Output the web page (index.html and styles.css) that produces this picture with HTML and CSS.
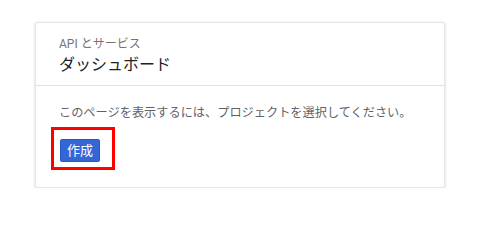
FILE: index.html
```html
<!DOCTYPE html>
<html lang="ja">
<head>
<meta charset="utf-8">
<link rel="stylesheet" href="styles.css">
</head>
<body>
<div class="card">
  <div class="card-header">
    <div class="eyebrow">API とサービス</div>
    <div class="title">ダッシュボード</div>
  </div>
  <div class="card-body">
    <p class="message">このページを表示するには、プロジェクトを選択してください。</p>
    <div class="action">
      <button class="btn-primary">作成</button>
      <span class="highlight"></span>
    </div>
  </div>
</div>
</body>
</html>
```
FILE: styles.css
```css
html, body {
  margin: 0;
  padding: 0;
  background: #ffffff;
}
body {
  font-family: Roboto, "Noto Sans CJK JP", sans-serif;
  padding: 22px 0 0 35px;
}
.card {
  width: 410px;
  height: 166px;
  box-sizing: border-box;
  background: #fff;
  border: 1px solid #e6e6e6;
  border-radius: 2px;
  box-shadow: 0 1px 3px 0 rgba(0,0,0,0.18);
}
.card-header {
  height: 63px;
  box-sizing: border-box;
  padding: 13px 23px 0 23px;
  border-bottom: 1px solid #e0e0e0;
}
.eyebrow {
  font-size: 12px;
  line-height: 16px;
  color: #757575;
}
.title {
  font-size: 16px;
  line-height: 24px;
  color: #202124;
  margin-top: 1px;
}
.card-body {
  padding: 17px 23px 0 23px;
}
.message {
  margin: 0;
  font-size: 12.2px;
  line-height: 20px;
  color: #5f6368;
}
.action {
  position: relative;
  display: inline-block;
  margin-top: 16px;
  margin-left: 1px;
}
.btn-primary {
  display: block;
  height: 23px;
  width: 40px;
  padding: 0;
  box-sizing: border-box;
  border: 1px solid #2a56c6;
  border-radius: 2px;
  background: #3367d6;
  color: #ffffff;
  font-family: Roboto, "Noto Sans CJK JP", sans-serif;
  font-size: 13px;
  line-height: 21px;
}
.highlight {
  position: absolute;
  left: -9px;
  top: -12px;
  right: -15px;
  bottom: -8px;
  border: 3.5px solid #ff0000;
  pointer-events: none;
}
```
